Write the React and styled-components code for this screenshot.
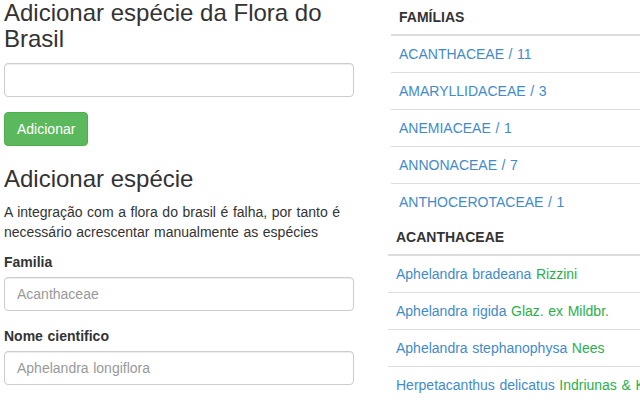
import React from "react";
import styled, { createGlobalStyle } from "styled-components";

const GlobalStyle = createGlobalStyle`
  * {
    box-sizing: border-box;
  }
  body {
    margin: 0;
    overflow: hidden;
    font-family: "Liberation Sans", Arial, sans-serif;
    font-size: 14px;
    line-height: 1.42857143;
    word-spacing: 0.7px;
    color: #333;
    background: #fff;
  }
`;

const familias = [
  { name: "ACANTHACEAE", count: 11 },
  { name: "AMARYLLIDACEAE", count: 3 },
  { name: "ANEMIACEAE", count: 1 },
  { name: "ANNONACEAE", count: 7 },
  { name: "ANTHOCEROTACEAE", count: 1 },
];

const especies = [
  { name: "Aphelandra bradeana", author: "Rizzini" },
  { name: "Aphelandra rigida", author: "Glaz. ex Mildbr." },
  { name: "Aphelandra stephanophysa", author: "Nees" },
  { name: "Herpetacanthus delicatus", author: "Indriunas & Kameyama" },
];

const App = () => {
  return (
    <>
      <GlobalStyle />
      <Page>
        <LeftColumn>
          <Title>Adicionar espécie da Flora do Brasil</Title>
          <FormGroup>
            <Input type="text" />
          </FormGroup>
          <Button type="button">Adicionar</Button>

          <Title spaced>Adicionar espécie</Title>
          <Text>
            A integração com a flora do brasil é falha, por tanto é necessário
            acrescentar manualmente as espécies
          </Text>
          <FormGroup>
            <Label>Familia</Label>
            <Input type="text" placeholder="Acanthaceae" />
          </FormGroup>
          <FormGroup>
            <Label>Nome cientifico</Label>
            <Input type="text" placeholder="Aphelandra longiflora" />
          </FormGroup>
        </LeftColumn>

        <RightColumn>
          <Table inset>
            <HeadCell>Famílias</HeadCell>
            {familias.map((f) => (
              <Row key={f.name}>
                <Link>
                  {f.name} / {f.count}
                </Link>
              </Row>
            ))}
          </Table>

          <Table>
            <HeadCell>Acanthaceae</HeadCell>
            {especies.map((e) => (
              <Row key={e.name}>
                <Link>{e.name}</Link> <Author>{e.author}</Author>
              </Row>
            ))}
          </Table>
        </RightColumn>
      </Page>
    </>
  );
};

export default App;

const Page = styled.div`
  display: flex;
  align-items: flex-start;
  width: 100%;
`;

const LeftColumn = styled.div`
  width: 350px;
  margin-left: 4px;
  flex-shrink: 0;
`;

const RightColumn = styled.div`
  flex: 1;
  min-width: 0;
  margin-left: 34px;
  white-space: nowrap;
`;

const Title = styled.h3`
  font-size: 24px;
  font-weight: 500;
  line-height: 1.1;
  word-spacing: normal;
  margin: ${({ spaced }) => (spaced ? "20px" : "0")} 0 10px;
`;

const FormGroup = styled.div`
  margin-bottom: 15px;
`;

const Label = styled.label`
  display: inline-block;
  margin-bottom: 5px;
  font-weight: bold;
`;

const Input = styled.input`
  display: block;
  width: 100%;
  height: 34px;
  padding: 6px 12px;
  font-family: inherit;
  font-size: 14px;
  line-height: 1.42857143;
  word-spacing: 0.7px;
  color: #555;
  background: #fff;
  border: 1px solid #ccc;
  border-radius: 4px;
  box-shadow: inset 0 1px 1px rgba(0, 0, 0, 0.075);
  outline: none;

  &::placeholder {
    color: #999;
  }
`;

const Button = styled.button`
  display: inline-block;
  padding: 6px 12px;
  font-family: inherit;
  font-size: 14px;
  line-height: 1.42857143;
  color: #fff;
  background: #5cb85c;
  border: 1px solid #4cae4c;
  border-radius: 4px;
  cursor: pointer;
`;

const Text = styled.p`
  margin: 0 0 10px;
`;

const Table = styled.div`
  display: flex;
  flex-direction: column;
  margin-left: ${({ inset }) => (inset ? "3px" : "0")};
`;

const HeadCell = styled.div`
  padding: 7px 8px;
  line-height: 20px;
  font-weight: bold;
  text-transform: uppercase;
  border-bottom: 2px solid #ddd;
`;

const Row = styled.div`
  padding: 8px;
  line-height: 20px;
  border-bottom: 1px solid #ddd;

  &:last-child {
    border-bottom: none;
  }
`;

const Link = styled.a`
  color: #428bca;
  text-decoration: none;
  cursor: pointer;
`;

const Author = styled.span`
  color: #28b04c;
`;
